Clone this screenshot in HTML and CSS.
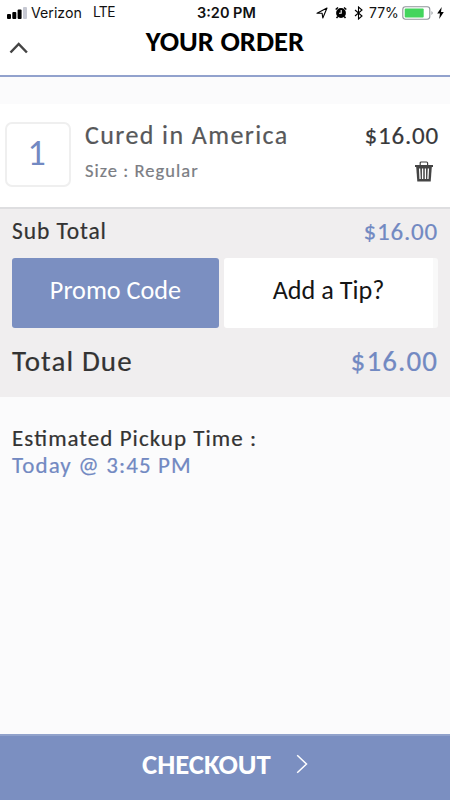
FILE: index.html
```html
<!DOCTYPE html>
<html lang="en">
<head>
<meta charset="utf-8">
<title>Your Order</title>
<link rel="stylesheet" href="styles.css">
</head>
<body>
<div class="screen">
  <div class="status">
    <svg class="signal" width="20" height="12" viewBox="0 0 20 12"><rect x="0" y="7" width="4" height="5" rx="1"/><rect x="5.3" y="5" width="4" height="7" rx="1"/><rect x="10.6" y="2.5" width="4" height="9.5" rx="1"/><rect x="16" y="0" width="4" height="12" rx="1" fill="#c6c8d2"/></svg>
    <span class="carrier">Verizon</span>
    <span class="network">LTE</span>
    <span class="clock">3:20 PM</span>
    <div class="indicators">
      <svg width="12" height="12" viewBox="0 0 12 12"><path d="M1 6.2 11 1 6.8 11 6.1 6.2Z" fill="none" stroke="#000" stroke-width="1.1" stroke-linejoin="round"/></svg>
      <svg class="alarm" width="12" height="13" viewBox="0 0 12 13"><circle cx="6" cy="7" r="4.9"/><path d="M.7 3.5 3 1.5M11.3 3.5 9 1.5M2.8 10.5 1.5 12M9.2 10.5 10.5 12" stroke="#000" stroke-width="1.5"/><path d="M6.2 4v3.3H4" fill="none" stroke="#fff" stroke-width="1.1"/></svg>
      <svg class="bluetooth" width="9" height="14" viewBox="0 0 9 14"><path d="M1 4 8 10 4.5 13V1L8 4 1 10" fill="none" stroke="#000" stroke-width="1.1"/></svg>
      <span class="percent">77%</span>
      <svg class="battery" width="33" height="14" viewBox="0 0 33 14"><rect x=".8" y=".8" width="27" height="12.4" rx="2.6" fill="#fff" stroke="#90959a" stroke-width="1.1"/><rect x="2.7" y="2.6" width="19" height="8.8" rx="1" fill="#43d55d"/><path d="M29.5 5q2.4 2 0 4z" fill="#90959a"/></svg>
      <svg class="charging" width="7" height="12" viewBox="0 0 7 12"><path d="M4.7 0 .2 6.5H3L2.2 12 6.8 5H4Z"/></svg>
    </div>
  </div>
  <header class="header">
    <svg class="collapse" width="20" height="14" viewBox="0 0 20 14"><path d="M1.5 11.5 9.7 3l8.2 8.5" fill="none" stroke="#444" stroke-width="2.5"/></svg>
    <h1 class="title">YOUR ORDER</h1>
  </header>
  <section class="item">
    <div class="quantity">1</div>
    <div class="details">
      <div class="name">Cured in America</div>
      <div class="option">Size : Regular</div>
    </div>
    <div class="cost">
      <div class="price">$16.00</div>
      <svg class="trash" width="20" height="21" viewBox="0 0 20 21"><path d="M6.2 4V2Q6.2 1 7.2 1h5.4q1 0 1 1v2" fill="none" stroke="#444" stroke-width="1.2"/><path d="M1 4h18v2H1z" fill="#444"/><path d="M2.2 6h15.6L16.7 20.5H3.3z" fill="#444"/><path d="M5.6 7.5l.5 10.5M8.6 7.5V18M11.4 7.5V18M14.4 7.5l-.5 10.5" stroke="#fff" stroke-width="1.3"/></svg>
    </div>
  </section>
  <section class="totals">
    <div class="row subtotal"><span class="label">Sub Total</span><span class="amount">$16.00</span></div>
    <div class="actions">
      <div class="promo">Promo Code</div>
      <div class="tip">Add a Tip?</div>
    </div>
    <div class="row due"><span class="label">Total Due</span><span class="amount">$16.00</span></div>
  </section>
  <section class="pickup">
    <div class="pickup-label">Es<span class="ligature">ti</span>mated Pickup Time :</div>
    <div class="pickup-time">Today @ 3:45 PM</div>
  </section>
  <footer class="checkout">
    <span class="checkout-text">CHECKOUT</span>
    <svg class="next" width="12" height="20" viewBox="0 0 12 20"><path d="M1.2 1.3 10.5 10 1.2 18.7" fill="none" stroke="#fff" stroke-width="1.5"/></svg>
  </footer>
</div>
</body>
</html>
```
FILE: styles.css
```css
* { box-sizing: border-box; }
body { margin: 0; font-family: Carlito, Lato, sans-serif; }
svg { display: block; flex: none; }
.screen { width: 450px; height: 800px; display: flex; flex-direction: column; background: #fbfbfc; overflow: hidden; white-space: nowrap; }
.status { height: 25px; flex: none; display: grid; grid-template-columns: 20px 61px 104px 130px 1fr; align-items: center; padding-left: 7px; background: #fff; font: 14.2px/25px Inter, sans-serif; color: #111; }
.carrier { padding-left: 4px; }
.network { padding-left: 5px; font-size: 13.8px; letter-spacing: -0.6px; }
.clock { padding-left: 5px; font-size: 14.5px; font-weight: 600; }
.indicators { display: flex; align-items: center; margin-left: -6px; }
.alarm { margin-left: 7px; }
.bluetooth { margin-left: 7px; }
.percent { margin-left: 6px; width: 30px; font-size: 14px; }
.battery { margin-left: 3px; }
.charging { margin-left: 2px; }
.header { height: 52px; flex: none; display: grid; grid-template-columns: 48px 1fr 48px; background: #fff; border-bottom: 2px solid #92a2cd; }
.collapse { margin: 16px 0 0 9px; }
.title { margin: 0; font-size: 28.7px; line-height: 34px; font-weight: 700; text-align: center; }
.item { height: 105px; flex: none; margin-top: 27px; display: flex; background: #fff; border-bottom: 2px solid #dedee0; padding: 18px 12px 0 5px; }
.quantity { width: 66px; height: 65px; border: 2px solid #efefef; border-radius: 7px; color: #7289c2; font-size: 36px; line-height: 58px; text-align: center; padding-right: 3px; }
.details { margin-left: 14px; flex: 1; }
.name, .option, .price, .row, .pickup { -webkit-text-stroke: 0.2px; }
.name { font-size: 26px; line-height: 26px; color: #57585a; letter-spacing: 1.4px; }
.option { font-size: 18.5px; line-height: 22px; margin-top: 12px; color: #7b7d83; letter-spacing: 1.05px; }
.cost { display: flex; flex-direction: column; align-items: flex-end; }
.price { font-size: 25px; line-height: 27px; color: #37383a; letter-spacing: 0.8px; margin-right: -1px; }
.trash { margin: 12px 4px 0 0; }
.totals { height: 188px; flex: none; background: #f0eeef; padding: 0 12px; }
.row { display: flex; justify-content: space-between; }
.row .label { color: #333; }
.row .amount { color: #7289c2; }
.subtotal { height: 49px; font-size: 23.5px; line-height: 45px; }
.subtotal .amount { font-size: 25px; line-height: 46px; letter-spacing: 0.8px; }
.subtotal .label { letter-spacing: 0.9px; }
.actions { display: flex; gap: 5px; height: 70px; font-size: 26.2px; line-height: 65px; text-align: center; }
.promo { width: 207px; background: #7b8fc1; color: #fff; border-radius: 3px; }
.tip { width: 214px; background: #fff; color: #151515; border-right: 5px solid #f9f9f9; border-radius: 3px; }
.due { height: 69px; font-size: 29px; line-height: 67px; letter-spacing: 1.1px; }
.pickup { flex: 1; padding: 28px 12px 0; }
.pickup-label { font-size: 23px; line-height: 27px; color: #333; letter-spacing: 1.03px; }
.ligature { letter-spacing: 0; margin-right: 1px; }
.pickup-time { font-size: 23px; line-height: 26px; color: #7289c2; letter-spacing: 1.1px; }
.checkout { height: 66px; flex: none; background: #7b8fc1; border-top: 2px solid #91a2cb; display: flex; align-items: center; padding: 0 0 7px 142px; color: #fff; font-size: 28.7px; font-weight: 700; }
.checkout-text { width: 129px; }
.next { margin-left: 25px; margin-top: -2px; }
```
